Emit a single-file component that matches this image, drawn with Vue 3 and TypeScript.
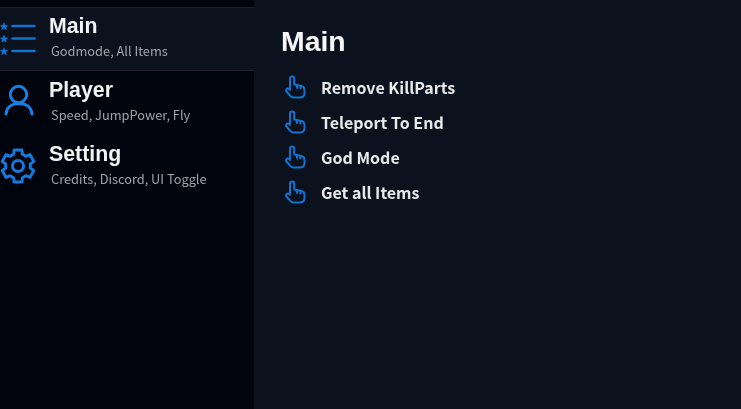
<script setup lang="ts">
interface Tab {
  title: string
  sub: string
  icon: 'list' | 'user' | 'gear'
  active?: boolean
}

const tabs: Tab[] = [
  { title: 'Main', sub: 'Godmode, All Items', icon: 'list', active: true },
  { title: 'Player', sub: 'Speed, JumpPower, Fly', icon: 'user' },
  { title: 'Setting', sub: 'Credits, Discord, UI Toggle', icon: 'gear' }
]

const actions = ['Remove KillParts', 'Teleport To End', 'God Mode', 'Get all Items']

// six teeth, first one points up
const gearPath = (() => {
  const pts: string[] = []
  for (let i = 0; i < 6; i++) {
    const a = (i * Math.PI) / 3 - Math.PI / 2
    const at = (r: number, d: number) => {
      const x = 18 + r * Math.cos(a + d)
      const y = 18 + r * Math.sin(a + d)
      return `${x.toFixed(1)} ${y.toFixed(1)}`
    }
    pts.push(at(12.5, -0.36), at(16.5, -0.24), at(16.5, 0.24), at(12.5, 0.36))
  }
  return 'M' + pts.join('L') + 'Z'
})()

const star = 'M0 -4.5L1.3 -1.5L4.4 -1.3L2 0.7L2.8 3.8L0 2.100L-2.8 3.8L-2 0.7L-4.4 -1.3L-1.3 -1.5Z'
</script>

<template>
  <div class="window">
    <aside class="sidebar">
      <div v-for="tab in tabs" :key="tab.title" class="tab" :class="{ active: tab.active }">
        <div class="tab-icon">
          <svg v-if="tab.icon === 'list'" width="36" height="36" viewBox="0 0 36 36">
            <g fill="#1272d0">
              <path :d="star" transform="translate(4 6.500)" />
              <path :d="star" transform="translate(4 19)" />
              <path :d="star" transform="translate(4 31.500)" />
            </g>
            <g stroke="#1272d0" stroke-width="2.500" stroke-linecap="round">
              <path d="M12.500 6H34.500" />
              <path d="M12.500 18.500H34.500" />
              <path d="M12.500 31H34.500" />
            </g>
          </svg>
          <svg v-else-if="tab.icon === 'user'" width="36" height="36" viewBox="0 0 36 36" fill="none" stroke="#1580e6" stroke-width="3" stroke-linecap="round">
            <circle cx="18.500" cy="10.500" r="8.200" />
            <path d="M6 30C6.500 24 11 19.500 19 19.500S31.500 24 32 30" />
          </svg>
          <svg v-else width="36" height="36" viewBox="0 0 36 36" fill="none" stroke="#1478dc" stroke-width="3" stroke-linejoin="round">
            <path :d="gearPath" />
            <circle cx="18" cy="18" r="5.500" />
          </svg>
        </div>
        <div class="tab-text">
          <div class="tab-title">{{ tab.title }}</div>
          <div class="tab-sub">{{ tab.sub }}</div>
        </div>
      </div>
    </aside>

    <main class="content">
      <h1 class="heading">Main</h1>
      <ul class="actions">
        <li v-for="action in actions" :key="action" class="action">
          <svg width="24" height="24" viewBox="0 0 24 24" fill="none" stroke="#1272d0" stroke-width="2" stroke-linecap="round" stroke-linejoin="round">
            <path d="M5 13.500V3.500C5 .8 9.200 .8 9.200 3.500V9.500L16.500 11C18.500 11.500 19.500 13 19.500 15V18C19.500 21 17.500 22.500 14.500 22.500H8.500C6.500 22.500 5.500 21.500 4.500 20L1.500 16.500C.5 15 1.500 13.500 3 13.500C4 13.500 4.500 14.200 5 15" />
            <path d="M12 10.300V13" />
            <path d="M15.300 11V13.500" />
          </svg>
          <span>{{ action }}</span>
        </li>
      </ul>
    </main>
  </div>
</template>

<style scoped>
.window {
  display: flex;
  width: 741px;
  height: 409px;
  overflow: hidden;
  background: #0b111d;
  filter: blur(0.3px);
}

.sidebar {
  width: 254px;
  padding-top: 7px;
  box-sizing: border-box;
  background: #01040c;
}

.tab {
  display: flex;
  gap: 13px;
  height: 64px;
  box-sizing: border-box;
  padding-top: 7px;
}

.tab.active {
  padding-top: 6px;
  background: #0b111d;
  border-top: 1px solid #1b212c;
  border-bottom: 1px solid #1b212c;
}

.tab-icon {
  width: 36px;
  height: 36px;
  margin-top: 6px;
}

.tab-title {
  font-family: "Liberation Sans", Arial, sans-serif;
  font-weight: 700;
  font-size: 21.300px;
  line-height: 24px;
  color: #f2f3f5;
}

.tab-sub {
  margin: 4px 0 0 2px;
  font-family: "Noto Sans CJK SC", "Open Sans", sans-serif;
  font-size: 12.800px;
  line-height: 18px;
  color: #a0a4ab;
}

.content {
  flex: 1;
  padding: 24px 0 0 27px;
}

.heading {
  margin: 0;
  font-family: "Liberation Sans", Arial, sans-serif;
  font-weight: 700;
  font-size: 28.400px;
  line-height: 34px;
  color: #f6f7f8;
}

.actions {
  list-style: none;
  margin: 11px 0 0;
  padding: 0;
}

.action {
  display: flex;
  align-items: center;
  gap: 12px;
  height: 35px;
  padding-left: 4px;
  font-family: "Noto Sans CJK SC", "Open Sans", sans-serif;
  font-weight: 700;
  font-size: 16px;
  color: #e8e9eb;
}
</style>
